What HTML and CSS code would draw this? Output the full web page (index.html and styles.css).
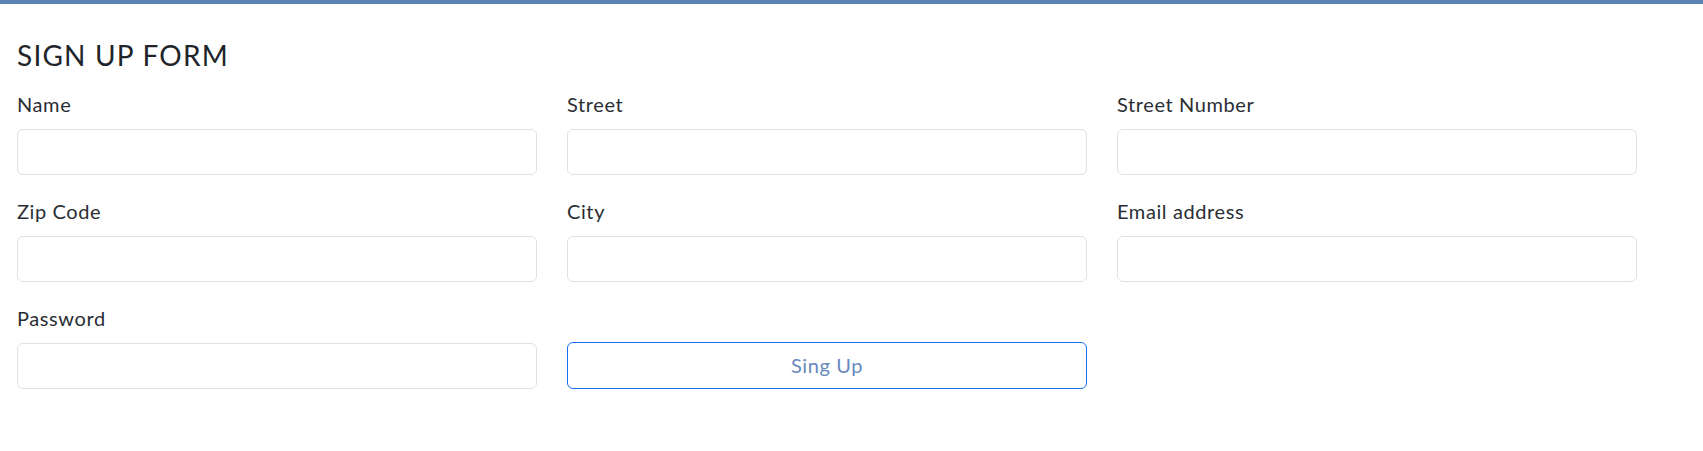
FILE: index.html
```html
<!DOCTYPE html>
<html lang="en">
<head>
<meta charset="utf-8">
<title>Sign Up Form</title>
<link rel="stylesheet" href="styles.css">
</head>
<body>
<div class="topbar"></div>
<main class="page">
  <h1 class="title">SIGN UP FORM</h1>
  <form class="form-grid">
    <div class="field">
      <label class="label" for="name">Name</label>
      <input class="input" id="name" type="text">
    </div>
    <div class="field">
      <label class="label" for="street">Street</label>
      <input class="input" id="street" type="text">
    </div>
    <div class="field">
      <label class="label" for="number">Street Number</label>
      <input class="input" id="number" type="text">
    </div>
    <div class="field">
      <label class="label" for="zip">Zip Code</label>
      <input class="input" id="zip" type="text">
    </div>
    <div class="field">
      <label class="label" for="city">City</label>
      <input class="input" id="city" type="text">
    </div>
    <div class="field">
      <label class="label" for="email">Email address</label>
      <input class="input" id="email" type="email">
    </div>
    <div class="field">
      <label class="label" for="password">Password</label>
      <input class="input" id="password" type="password">
    </div>
    <div class="field field-end">
      <button class="btn" type="button">Sing Up</button>
    </div>
  </form>
</main>
</body>
</html>
```
FILE: styles.css
```css
* {
  box-sizing: border-box;
}

html, body {
  margin: 0;
  padding: 0;
  background: #ffffff;
}

body {
  font-family: "Lato", "Open Sans", sans-serif;
  color: #212529;
}

.topbar {
  height: 4px;
  background: #5a84b1;
}

.page {
  padding: 0 17px;
}

.title {
  margin: 35px 0 16px;
  font-size: 28px;
  font-weight: 400;
  line-height: 1.2;
  letter-spacing: 1.2px;
  color: #212529;
}

.form-grid {
  display: grid;
  grid-template-columns: repeat(3, 520px);
  column-gap: 30px;
  row-gap: 21px;
}

.field {
  display: flex;
  flex-direction: column;
}

.field-end {
  justify-content: flex-end;
}

.label {
  font-size: 20px;
  line-height: 30px;
  margin-bottom: 10px;
  letter-spacing: 0.6px;
  color: #2a2e33;
}

.input {
  height: 46px;
  width: 100%;
  border: 1px solid #dee2e6;
  border-radius: 6px;
  background: #fff;
  font: inherit;
  font-size: 20px;
  padding: 0 15px;
}

.btn {
  height: 47px;
  width: 100%;
  border: 1px solid #1a6ef0;
  border-radius: 6px;
  background: #fff;
  color: #6889bd;
  font-family: inherit;
  font-size: 20px;
  line-height: 1.5;
  letter-spacing: 0.6px;
  cursor: pointer;
}
```
